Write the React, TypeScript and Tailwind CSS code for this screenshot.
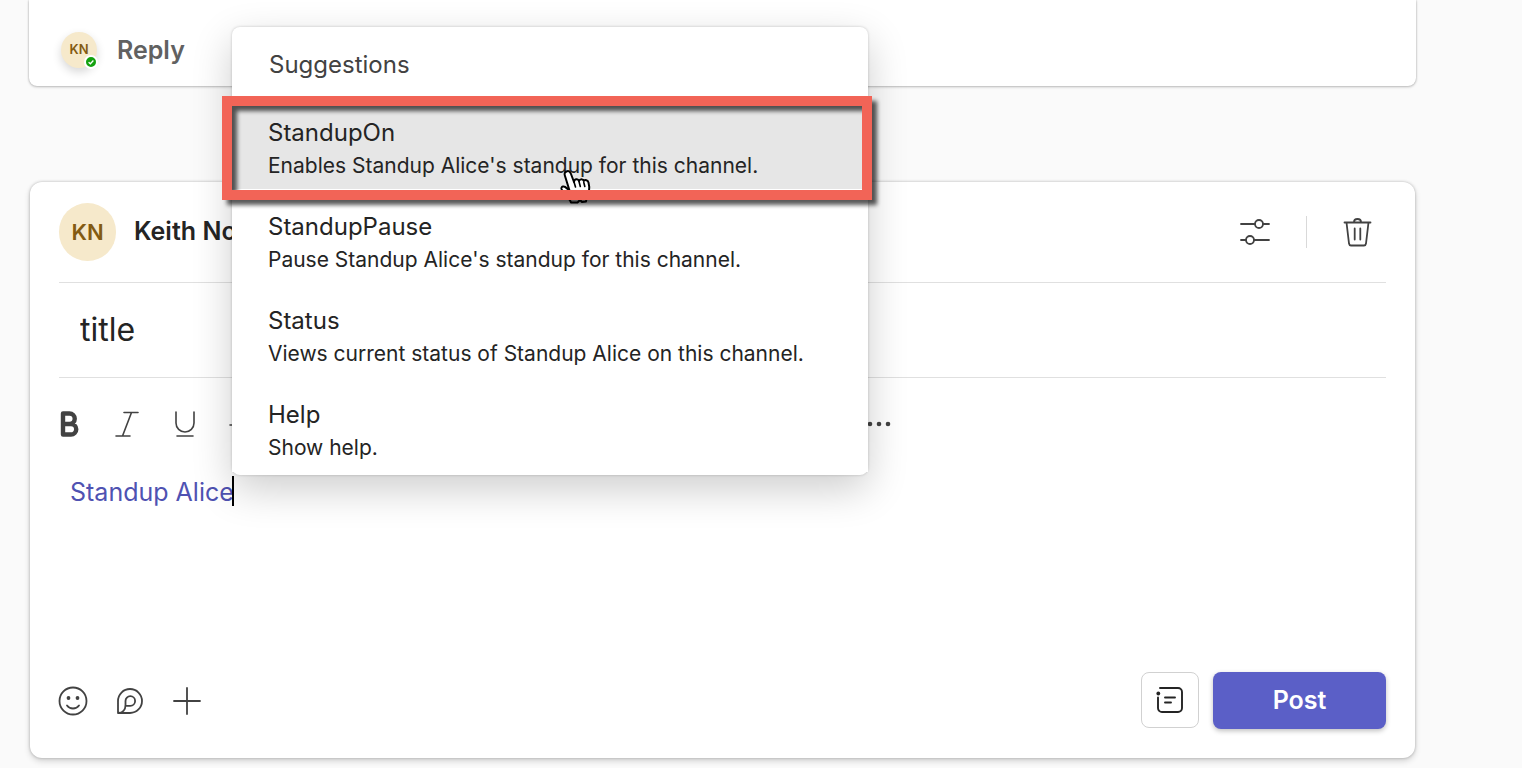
import { useState } from "react";
import type { ReactNode } from "react";

const suggestions = [
  { title: "StandupOn", text: "Enables Standup Alice's standup for this channel." },
  { title: "StandupPause", text: "Pause Standup Alice's standup for this channel." },
  { title: "Status", text: "Views current status of Standup Alice on this channel." },
  { title: "Help", text: "Show help." },
];

function IconButton({ label, children }: { label: string; children: ReactNode }) {
  return (
    <button type="button" aria-label={label} className="flex h-8 w-8 items-center justify-center text-[#424242]">
      {children}
    </button>
  );
}

function ReplyCard() {
  return (
    <section className="flex h-[86px] items-end rounded-b-lg bg-white px-8 pb-[18px] shadow-[0_0_2px_rgba(0,0,0,0.25),0_1px_3px_rgba(0,0,0,0.2)]">
      <div className="flex items-center gap-5">
        <div className="relative flex h-9 w-9 items-center justify-center rounded-full bg-[#f6e9cb] text-[13px] font-semibold text-[#835b12] shadow-[0_4px_10px_rgba(0,0,0,0.16)]">
          KN
          <span className="absolute -right-px -bottom-px flex h-[14px] w-[14px] items-center justify-center rounded-full border-2 border-white bg-[#13a10e]">
            <svg viewBox="0 0 10 10" className="h-2 w-2" fill="none" stroke="white" strokeWidth="1.6">
              <path d="M2 5.2 4.2 7.2 8 3.2" />
            </svg>
          </span>
        </div>
        <button type="button" className="text-[25px] leading-9 font-semibold text-[#616161]">
          Reply
        </button>
      </div>
    </section>
  );
}

function FormatBar() {
  return (
    <div className="flex items-center gap-[26px]">
      <IconButton label="Bold">
        <svg viewBox="0 0 32 32" className="h-8 w-8" fill="none" stroke="currentColor" strokeWidth="4.4" strokeLinejoin="round">
          <path d="M10 5.500h6.500a5 5 0 0 1 0 10.500H10zM10 16h8a5.200 5.200 0 0 1 0 10.500h-8z" />
        </svg>
      </IconButton>
      <IconButton label="Italic">
        <svg viewBox="0 0 32 32" className="h-8 w-8" fill="none" stroke="currentColor" strokeWidth="1.6" strokeLinecap="round">
          <path d="M13 4.500h14M5 28h14M20.500 4.500 11.500 28" />
        </svg>
      </IconButton>
      <IconButton label="Underline">
        <svg viewBox="0 0 32 32" className="h-8 w-8" fill="none" stroke="currentColor" strokeWidth="1.6" strokeLinecap="round">
          <path d="M7 4v11a9 9 0 0 0 18 0V4M8 28h16" />
        </svg>
      </IconButton>
      <IconButton label="Strikethrough">
        <svg viewBox="0 0 32 32" className="h-8 w-8" fill="none" stroke="currentColor" strokeWidth="1.6" strokeLinecap="round">
          <path d="M3 17h26M23 8c-2-4-14-5-14 2 0 3 3 5 7 7M9 23c3 6 15 5 15-1" />
        </svg>
      </IconButton>
    </div>
  );
}

function Composer() {
  const [title, setTitle] = useState("title");

  return (
    <section className="mx-px rounded-xl bg-white px-[29px] pb-[29px] shadow-[0_0_3px_rgba(0,0,0,0.25),0_3px_6px_rgba(0,0,0,0.16)]">
      <header className="flex h-[101px] items-center justify-between border-b border-[#e0e0e0]">
        <div className="flex items-center gap-[18px]">
          <div className="flex h-[58px] w-[57px] items-center justify-center rounded-full bg-[#f6e9cb] text-[22px] font-semibold text-[#835b12]">
            KN
          </div>
          <span className="text-[25px] font-semibold text-[#242424]">Keith No</span>
        </div>
        <div className="flex items-center gap-[35px] pr-3">
          <IconButton label="Post settings">
            <svg viewBox="0 0 32 32" className="h-8 w-8" fill="none" stroke="currentColor" strokeWidth="1.8" strokeLinecap="round">
              <path d="M2 8h14M24 8h6M2 24h5M15 24h15" />
              <circle cx="20" cy="8" r="4" />
              <circle cx="11" cy="24" r="4" />
            </svg>
          </IconButton>
          <span className="h-8 w-px bg-[#d9d9d9]" />
          <IconButton label="Discard">
            <svg viewBox="0 0 32 32" className="h-8 w-8" fill="none" stroke="currentColor" strokeWidth="1.8" strokeLinecap="round" strokeLinejoin="round">
              <path d="M2.500 6.500h26M12 6c0-4 7-4 7 0M4.500 6.500l2.500 21c.2 1.200.8 2 2 2h13c1.200 0 1.800-.8 2-2l2.500-21M12.700 12.500v11M18.300 12.500v11" />
            </svg>
          </IconButton>
        </div>
      </header>

      <div className="flex h-[95px] items-center border-b border-[#e0e0e0] px-[21px]">
        <input
          aria-label="Subject"
          value={title}
          onChange={(e) => setTitle(e.target.value)}
          className="w-full text-[32px] text-[#242424] outline-none"
        />
      </div>

      <div className="-ml-1.5 flex items-center justify-between pt-[30px] pr-[491px]">
        <FormatBar />
        <IconButton label="More options">
          <svg viewBox="0 0 32 32" className="h-8 w-8" fill="currentColor">
            <circle cx="7" cy="16" r="2.300" />
            <circle cx="16" cy="16" r="2.300" />
            <circle cx="25" cy="16" r="2.300" />
          </svg>
        </IconButton>
      </div>

      <div role="textbox" aria-label="Message" className="flex h-[232px] items-start pt-9 pl-[11px] text-[25px] leading-8 text-[#4f52b2]">
        <span>Standup Alice</span>
        <span className="-ml-0.5 h-[30px] w-[2px] bg-black" />
      </div>

      <footer className="flex items-center justify-between">
        <div className="-ml-0.5 flex items-center gap-[25px]">
          <IconButton label="Emoji">
            <svg viewBox="0 0 32 32" className="h-8 w-8" fill="none" stroke="currentColor" strokeWidth="1.8" strokeLinecap="round">
              <circle cx="16" cy="16" r="13.500" />
              <path d="M10 20.500c3 4 9 4 12 0" />
              <circle cx="11.500" cy="13" r="1.900" fill="currentColor" stroke="none" />
              <circle cx="20.500" cy="13" r="1.900" fill="currentColor" stroke="none" />
            </svg>
          </IconButton>
          <IconButton label="Loop">
            <svg viewBox="0 0 32 32" className="h-8 w-8" fill="none" stroke="currentColor" strokeWidth="1.8" strokeLinejoin="round">
              <path d="M4 28V16A12 12 0 1 1 16 28H4c4.500 0 7.500-3 7.500-8v-4a4.800 4.800 0 1 1 4.800 4.800h-4.800" />
            </svg>
          </IconButton>
          <IconButton label="Actions and apps">
            <svg viewBox="0 0 32 32" className="h-8 w-8" fill="none" stroke="currentColor" strokeWidth="1.8" strokeLinecap="round">
              <path d="M16 3v26M3 16h26" />
            </svg>
          </IconButton>
        </div>
        <div className="flex items-start gap-[14px]">
          <button
            type="button"
            aria-label="Post format"
            className="flex h-14 w-[58px] items-center justify-center rounded-lg border border-[#d1d1d1] text-[#242424]"
          >
            <svg viewBox="0 0 32 32" className="h-8 w-8" fill="none" stroke="currentColor" strokeWidth="1.9" strokeLinecap="round">
              <path d="M6 4h18a4 4 0 0 1 4 4v16a4 4 0 0 1-4 4H8a4 4 0 0 1-4-4V13.500M11 13.500h10M11 18.500h6" />
              <circle cx="4.300" cy="9.500" r="1.900" fill="currentColor" stroke="none" />
            </svg>
          </button>
          <button type="button" className="h-[57px] w-[173px] rounded-lg bg-[#5b5fc7] text-[25px] font-semibold text-white shadow-[0_2px_5px_rgba(0,0,0,0.25)]">
            Post
          </button>
        </div>
      </footer>
    </section>
  );
}

function HandCursor() {
  return (
    <svg viewBox="0 0 32 36" className="absolute top-[141px] left-[327px] h-9 w-8" fill="white" stroke="black" strokeWidth="2" strokeLinejoin="round" strokeLinecap="round">
      <path d="M7.500 3.500c2-1 3.500 0 4.500 2.500l3 8c0-3 4-4 5-1 1-2.500 4-2.500 4.800 0 1.200-1.500 4-1.200 4.700 1.500.8 3 1.200 6 .5 9-.7 2.500-2.500 4-3 10l-4 .5-2-2-2.500 2.500H12c-1-4-7.500-8-9.500-13.500-.7-2.500 2.500-4 5.500-.5l2.500 2L6 8c-.8-2-.5-3.700 1.500-4.500z" />
      <path d="m15 14 1.500 5M20 13.500l1.300 5M24.800 14.500l1 4M16 24v5M20 24v5M24 23.500v5" strokeWidth="1.600" />
    </svg>
  );
}

function SuggestionMenu() {
  const [active, setActive] = useState(0);

  return (
    <div className="absolute top-[27px] left-[232px] w-[636px] rounded-lg bg-white pb-[3px] text-[#242424] shadow-[0_0_3px_rgba(0,0,0,0.2),0_14px_40px_rgba(0,0,0,0.2)]">
      <h2 className="px-[37px] pt-[21px] pb-[14px] text-2xl leading-[34px] text-[#424242]">Suggestions</h2>
      <ul>
        {suggestions.map((item, i) => (
          <li key={item.title}>
            <button
              type="button"
              onMouseEnter={() => setActive(i)}
              className={`block w-full border-b border-white px-9 pt-5 pb-[7px] text-left ${i === active ? "bg-[#e6e6e6]" : "bg-white"}`}
            >
              <span className="block text-2xl leading-[34px]">{item.title}</span>
              <span className="block text-[21px] leading-8">{item.text}</span>
            </button>
          </li>
        ))}
      </ul>
      <HandCursor />
      <div className="pointer-events-none absolute top-[69px] -right-1 -left-[10px] h-[104px] border-[10px] border-[#f26457] drop-shadow-[5px_5px_2px_rgba(0,0,0,0.65)]" />
    </div>
  );
}

export default function App() {
  return (
    <main className="relative min-h-screen bg-[#fafafa] pr-[106px] pb-[10px] pl-[29px] font-[Inter,'Liberation_Sans',sans-serif]">
      <div className="flex flex-col gap-24">
        <ReplyCard />
        <Composer />
      </div>
      <SuggestionMenu />
    </main>
  );
}
